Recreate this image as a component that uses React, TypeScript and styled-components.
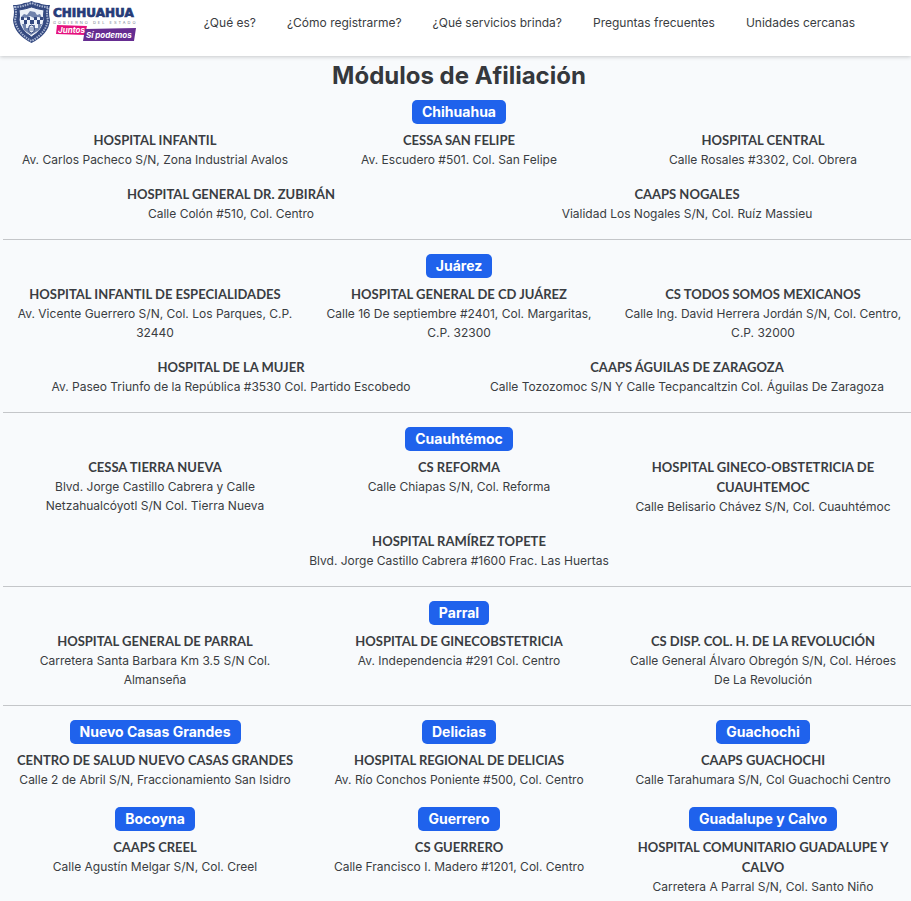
import React from 'react';
import styled, { createGlobalStyle } from 'styled-components';

const GlobalStyle = createGlobalStyle`
  *, *::before, *::after { box-sizing: border-box; }
  html { overflow: hidden auto; scrollbar-width: none; }
  body {
    margin: 0;
    background: #f8fafc;
    color: #3a3d42;
    font: 400 12px/19px Inter, 'Noto Sans', sans-serif;
  }
`;

const Header = styled.header`
  display: flex;
  align-items: flex-start;
  justify-content: space-between;
  height: 56px;
  padding: 0 56px 0 12px;
  background: #fff;
  box-shadow: 0 1px 4px rgba(0, 0, 0, 0.2);
`;

const LogoLink = styled.a`
  display: block;
  line-height: 0;
`;

const Nav = styled.nav`
  display: flex;
  gap: 31px;
  padding-top: 13px;
`;

const NavLink = styled.a`
  color: #3a3d42;
  text-decoration: none;
  white-space: nowrap;
`;

const Main = styled.main`
  padding: 6px 0 16px 3px;
  overflow: hidden;
`;

const Content = styled.div`
  margin-right: -4px;
`;

const Title = styled.h1`
  margin: 0 0 10px;
  color: #35383c;
  font: 700 24px/28px Inter, sans-serif;
  text-align: center;
`;

const Region = styled.section`
  display: flex;
  flex-direction: column;
  gap: 15px;
  padding-bottom: 16px;
  text-align: center;

  & + & {
    padding-top: 14px;
    border-top: 1px solid #c4c6c9;
  }

  &:last-child {
    gap: 18px;
  }
`;

const Group = styled.div``;

const Row = styled.div<{ $columns: number }>`
  display: grid;
  grid-template-columns: repeat(${(p) => p.$columns}, minmax(0, 1fr));
`;

const BadgeLine = styled.div`
  display: flex;
  justify-content: center;
  margin-bottom: 6px;
`;

const Badge = styled.h2`
  margin: 0;
  padding: 0 10px;
  border-radius: 5px;
  background: #1f62ec;
  color: #fff;
  font: 700 14px/24px Inter, sans-serif;
`;

const Module = styled.article`
  padding: 0 12px;
`;

const Name = styled.h3`
  margin: 0;
  font: 700 13px/20px Lato, sans-serif;
`;

const Address = styled.p`
  margin: 0;
`;

type Place = { name: string; address: string; city?: string };

const links = ['¿Qué es?', '¿Cómo registrarme?', '¿Qué servicios brinda?', 'Preguntas frecuentes', 'Unidades cercanas'];

const regions: { city?: string; rows: Place[][] }[] = [
  {
    city: 'Chihuahua',
    rows: [
      [
        { name: 'HOSPITAL INFANTIL', address: 'Av. Carlos Pacheco S/N, Zona Industrial Avalos' },
        { name: 'CESSA SAN FELIPE', address: 'Av. Escudero #501. Col. San Felipe' },
        { name: 'HOSPITAL CENTRAL', address: 'Calle Rosales #3302, Col. Obrera' },
      ],
      [
        { name: 'HOSPITAL GENERAL DR. ZUBIRÁN', address: 'Calle Colón #510, Col. Centro' },
        { name: 'CAAPS NOGALES', address: 'Vialidad Los Nogales S/N, Col. Ruíz Massieu' },
      ],
    ],
  },
  {
    city: 'Juárez',
    rows: [
      [
        { name: 'HOSPITAL INFANTIL DE ESPECIALIDADES', address: 'Av. Vicente Guerrero S/N, Col. Los Parques, C.P. 32440' },
        { name: 'HOSPITAL GENERAL DE CD JUÁREZ', address: 'Calle 16 De septiembre #2401, Col. Margaritas, C.P. 32300' },
        { name: 'CS TODOS SOMOS MEXICANOS', address: 'Calle Ing. David Herrera Jordán S/N, Col. Centro, C.P. 32000' },
      ],
      [
        { name: 'HOSPITAL DE LA MUJER', address: 'Av. Paseo Triunfo de la República #3530 Col. Partido Escobedo' },
        { name: 'CAAPS ÁGUILAS DE ZARAGOZA', address: 'Calle Tozozomoc S/N Y Calle Tecpancaltzin Col. Águilas De Zaragoza' },
      ],
    ],
  },
  {
    city: 'Cuauhtémoc',
    rows: [
      [
        { name: 'CESSA TIERRA NUEVA', address: 'Blvd. Jorge Castillo Cabrera y Calle Netzahualcóyotl S/N Col. Tierra Nueva' },
        { name: 'CS REFORMA', address: 'Calle Chiapas S/N, Col. Reforma' },
        { name: 'HOSPITAL GINECO-OBSTETRICIA DE CUAUHTEMOC', address: 'Calle Belisario Chávez S/N, Col. Cuauhtémoc' },
      ],
      [{ name: 'HOSPITAL RAMÍREZ TOPETE', address: 'Blvd. Jorge Castillo Cabrera #1600 Frac. Las Huertas' }],
    ],
  },
  {
    city: 'Parral',
    rows: [
      [
        { name: 'HOSPITAL GENERAL DE PARRAL', address: 'Carretera Santa Barbara Km 3.5 S/N Col. Almanseña' },
        { name: 'HOSPITAL DE GINECOBSTETRICIA', address: 'Av. Independencia #291 Col. Centro' },
        { name: 'CS DISP. COL. H. DE LA REVOLUCIÓN', address: 'Calle General Álvaro Obregón S/N, Col. Héroes De La Revolución' },
      ],
    ],
  },
  {
    rows: [
      [
        { city: 'Nuevo Casas Grandes', name: 'CENTRO DE SALUD NUEVO CASAS GRANDES', address: 'Calle 2 de Abril S/N, Fraccionamiento San Isidro' },
        { city: 'Delicias', name: 'HOSPITAL REGIONAL DE DELICIAS', address: 'Av. Río Conchos Poniente #500, Col. Centro' },
        { city: 'Guachochi', name: 'CAAPS GUACHOCHI', address: 'Calle Tarahumara S/N, Col Guachochi Centro' },
      ],
      [
        { city: 'Bocoyna', name: 'CAAPS CREEL', address: 'Calle Agustín Melgar S/N, Col. Creel' },
        { city: 'Guerrero', name: 'CS GUERRERO', address: 'Calle Francisco I. Madero #1201, Col. Centro' },
        { city: 'Guadalupe y Calvo', name: 'HOSPITAL COMUNITARIO GUADALUPE Y CALVO', address: 'Carretera A Parral S/N, Col. Santo Niño' },
      ],
    ],
  },
];

function CityBadge({ children }: { children: React.ReactNode }) {
  return (
    <BadgeLine>
      <Badge>{children}</Badge>
    </BadgeLine>
  );
}

function Logo() {
  return (
    <svg width="128" height="46" viewBox="0 0 128 46" role="img" aria-label="Chihuahua, Gobierno del Estado">
      <path d="M1 5Q8 5 12 3Q16 3 19.500 1Q23 3 27 3Q31 5 38 5Q36 11 38 20Q37 34 19.500 43Q2 34 1 20Q3 11 1 5Z" fill="#344980" />
      <path d="M3 7Q10 7 19.500 3Q29 7 36 7Q34 13 36 20Q34 33 19.500 41Q5 33 3 20Q5 13 3 7Z" fill="none" stroke="#aab6d2" strokeWidth="2" strokeDasharray="1.500 1" />
      <path d="M7 10Q14 9 19.500 7Q25 9 32 10Q31 15 32 20Q31 30 19.500 37Q8 30 7 20Q8 15 7 10Z" fill="#edf1f8" stroke="#344980" />
      <path d="M9 17L12 14L15 15L18 11L23 12L25 15L28 14L30 18L26 17L22 18L18 16L14 18Z" fill="#7183ac" />
      <path d="M9 17h3v3h3v-3h3v3h4v-3h3v3h3v-3h3v3h-3v4h-3v-4h-3v4h-4v-4h-3v4h-3v-4h-3z" fill="#344980" />
      <path d="M10 24h4v4h3v-3h6v3h3v-4h4l-3 6-8 5-7-5z" fill="#7183ac" />
      <ellipse cx="19.500" cy="29" rx="3" ry="4" fill="#e5eaf4" stroke="#344980" />
      <path d="M17 28h5M17 30h5" stroke="#7183ac" />
      <text x="41" y="17" fill="#263b78" stroke="#263b78" strokeWidth="0.700" fontFamily="DejaVu Sans, sans-serif" fontSize="12" fontWeight="700">CHIHUAHUA</text>
      <text x="41" y="24" fill="#767d8d" fontFamily="Inter, sans-serif" fontSize="4" letterSpacing="2">GOBIERNO DEL ESTADO</text>
      <path d="M45 25L75 26L73 35L44 34Z" fill="#e5127d" />
      <path d="M73 29L124 28L122 41L71 41Z" fill="#662d91" />
      <g fill="#fff" fontFamily="Inter, sans-serif" fontStyle="italic" fontWeight="700">
        <text x="46" y="33" fontSize="8">Juntos</text>
        <text x="74" y="38" fontSize="8">Sí podemos</text>
      </g>
    </svg>
  );
}

export default function App() {
  return (
    <>
      <GlobalStyle />
      <Header>
        <LogoLink href="#inicio">
          <Logo />
        </LogoLink>
        <Nav>
          {links.map((link) => (
            <NavLink key={link} href="#">
              {link}
            </NavLink>
          ))}
        </Nav>
      </Header>
      <Main>
        <Content>
          <Title>Módulos de Afiliación</Title>
          {regions.map((region, index) => (
            <Region key={index}>
              {region.rows.map((row, rowIndex) => (
                <Group key={rowIndex}>
                  {rowIndex === 0 && region.city && <CityBadge>{region.city}</CityBadge>}
                  <Row $columns={row.length}>
                    {row.map((place) => (
                      <Module key={place.name}>
                        {place.city && <CityBadge>{place.city}</CityBadge>}
                        <Name>{place.name}</Name>
                        <Address>{place.address}</Address>
                      </Module>
                    ))}
                  </Row>
                </Group>
              ))}
            </Region>
          ))}
        </Content>
      </Main>
    </>
  );
}
